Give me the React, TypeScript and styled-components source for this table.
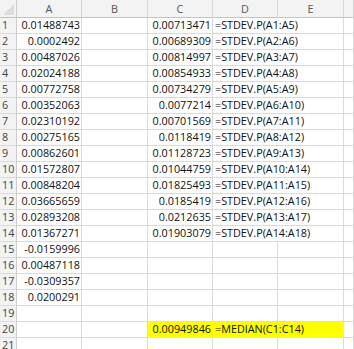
import { FC } from 'react'
import styled, { createGlobalStyle } from 'styled-components'

const GlobalStyle = createGlobalStyle`
  body {
    margin: 0;
    background: #fff;
    font-family: 'Open Sans', 'Liberation Sans', sans-serif;
    overflow: hidden;
  }
`

const Sheet = styled.div`
  display: grid;
  grid-template-columns: 17px 65px 66px 65px 65px 66px 1fr;
  grid-template-rows: 18px;
  grid-auto-rows: 16px;
  width: 354px;
  height: 349px;
  overflow: hidden;
  font-size: 10.8px;
  color: #111;
`

const Corner = styled.div`
  position: relative;
  background: #f3f3f3;
  border-right: 1px solid #cdcdcd;
  border-bottom: 1px solid #c4c4c4;
  &::after {
    content: '';
    position: absolute;
    right: 2px;
    bottom: 2px;
    border-left: 11px solid transparent;
    border-bottom: 11px solid #dcdcdc;
  }
`

const ColHeader = styled.div`
  display: flex;
  align-items: center;
  justify-content: center;
  background: #f3f3f3;
  border-right: 1px solid #d6d6d6;
  border-bottom: 1px solid #c4c4c4;
  color: #555;
`

const RowHeader = styled.div`
  display: flex;
  align-items: flex-end;
  padding: 0 0 1px 2px;
  background: #f3f3f3;
  border-right: 1px solid #cdcdcd;
  border-bottom: 1px solid #dadada;
  color: #444;
  line-height: 14px;
`

const Cell = styled.div<{ $align?: 'left' | 'right'; $fill?: string; $span?: number }>`
  display: flex;
  align-items: flex-end;
  justify-content: ${(p) => (p.$align === 'left' ? 'flex-start' : 'flex-end')};
  padding: ${(p) => (p.$align === 'left' ? '0 0 1px 2px' : '0 1px 1px 0')};
  grid-column: ${(p) => (p.$span ? `span ${p.$span}` : 'auto')};
  background: ${(p) => p.$fill || 'transparent'};
  border-right: 1px solid ${(p) => p.$fill || '#dadada'};
  border-bottom: 1px solid ${(p) => p.$fill || '#dadada'};
  white-space: nowrap;
  line-height: 14px;
`

const colA = [
  '0.01488743', '0.0002492', '0.00487026', '0.02024188', '0.00772758', '0.00352063',
  '0.02310192', '0.00275165', '0.00862601', '0.01572807', '0.00848204', '0.03665659',
  '0.02893208', '0.01367271', '-0.0159996', '0.00487118', '-0.0309357', '0.0200291',
]

const colC = [
  '0.00713471', '0.00689309', '0.00814997', '0.00854933', '0.00734279', '0.0077214',
  '0.00701569', '0.0118419', '0.01128723', '0.01044759', '0.01825493', '0.0185419',
  '0.0212635', '0.01903079',
]

const YELLOW = '#ffff00'

const Row: FC<{ n: number }> = ({ n }) => {
  const a = colA[n - 1]
  const c = colC[n - 1]
  if (n === 20) {
    return (
      <>
        <RowHeader>{n}</RowHeader>
        <Cell />
        <Cell />
        <Cell $fill={YELLOW}>0.00949846</Cell>
        <Cell $fill={YELLOW} $align="left" $span={2}>
          =MEDIAN(C1:C14)
        </Cell>
        <Cell />
      </>
    )
  }
  return (
    <>
      <RowHeader>{n}</RowHeader>
      <Cell>{a}</Cell>
      <Cell />
      <Cell>{c}</Cell>
      {c ? (
        <Cell $align="left" $span={2}>
          =STDEV.P(A{n}:A{n + 4})
        </Cell>
      ) : (
        <>
          <Cell />
          <Cell />
        </>
      )}
      <Cell />
    </>
  )
}

const App: FC = () => {
  const rows = Array.from({ length: 21 }, (_, i) => i + 1)
  return (
    <>
      <GlobalStyle />
      <Sheet>
        <Corner />
        {['A', 'B', 'C', 'D', 'E', ''].map((l, i) => (
          <ColHeader key={i}>{l}</ColHeader>
        ))}
        {rows.map((n) => (
          <Row key={n} n={n} />
        ))}
      </Sheet>
    </>
  )
}

export default App
